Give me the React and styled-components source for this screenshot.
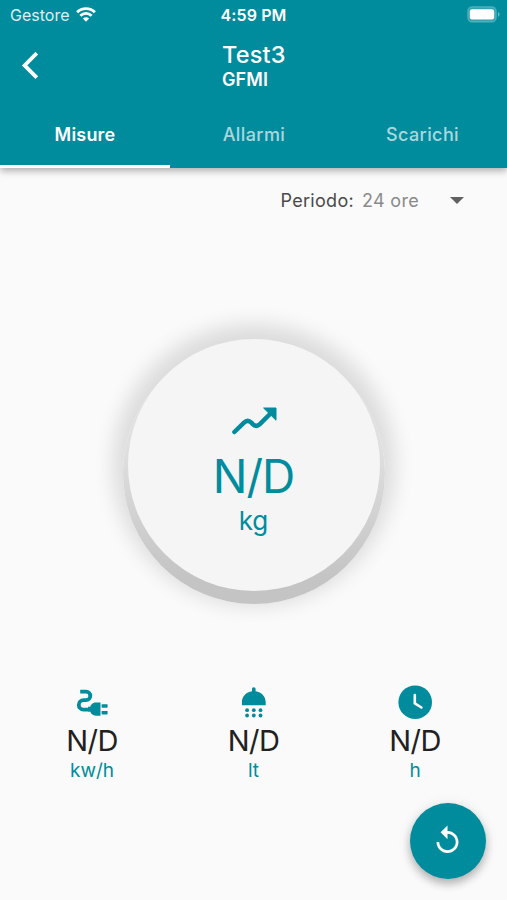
import { useState } from "react";
import styled, { createGlobalStyle } from "styled-components";

const TABS = ["Misure", "Allarmi", "Scarichi"];

const MEASURES = [
    { id: "energy", icon: PlugIcon, value: "N/D", unit: "kw/h" },
    { id: "water", icon: ShowerIcon, value: "N/D", unit: "lt" },
    { id: "time", icon: ClockIcon, value: "N/D", unit: "h" },
];

export default function App() {
    const [activeTab, setActiveTab] = useState("Misure");

    return (
        <Screen>
            <GlobalStyle />
            <Header>
                <StatusBar>
                    <Carrier>
                        <span>Gestore</span>
                        <WifiIcon />
                    </Carrier>
                    <Clock>4:59 PM</Clock>
                    <BatteryIcon />
                </StatusBar>
                <TitleBar>
                    <BackButton aria-label="Indietro">
                        <BackIcon />
                    </BackButton>
                    <Titles>
                        <Title>Test3</Title>
                        <Subtitle>GFMI</Subtitle>
                    </Titles>
                </TitleBar>
                <Tabs>
                    {TABS.map((tab) => (
                        <Tab
                            key={tab}
                            $active={tab === activeTab}
                            onClick={() => setActiveTab(tab)}
                        >
                            {tab}
                        </Tab>
                    ))}
                </Tabs>
            </Header>
            <Period>
                <PeriodLabel>Periodo:</PeriodLabel>
                <PeriodSelect>
                    <span>24 ore</span>
                    <Caret />
                </PeriodSelect>
            </Period>
            <DialArea>
                <DialBase>
                    <DialFace>
                        <TrendIcon />
                        <DialValue>N/D</DialValue>
                        <DialUnit>kg</DialUnit>
                    </DialFace>
                </DialBase>
            </DialArea>
            <Measures>
                {MEASURES.map(({ id, icon: Icon, value, unit }) => (
                    <Measure key={id}>
                        <Icon />
                        <MeasureValue>{value}</MeasureValue>
                        <MeasureUnit>{unit}</MeasureUnit>
                    </Measure>
                ))}
            </Measures>
            <RefreshButton aria-label="Aggiorna">
                <ReplayIcon />
            </RefreshButton>
        </Screen>
    );
}

function WifiIcon() {
    return (
        <svg width="20" height="15" viewBox="0 0 20 15" fill="none" stroke="#fff" strokeWidth="2.9">
            <path d="M1.1 5.3C6 .4 14 .4 18.9 5.3" />
            <path d="M4.4 8.7c3.2-3.1 8-3.1 11.2 0" />
            <path d="M10 14.7 6.9 11.6c1.8-1.7 4.4-1.7 6.2 0z" fill="#fff" stroke="none" />
        </svg>
    );
}

function BatteryIcon() {
    return (
        <svg width="33" height="17" viewBox="0 0 33 17">
            <rect x=".8" y=".8" width="28.4" height="15.2" rx="4.4" fill="#fff" fillOpacity=".2" stroke="#fff" strokeOpacity=".2" strokeWidth="1.5" />
            <rect x="2.8" y="3.2" width="24.4" height="10.2" rx="2.2" fill="#fff" />
            <path d="M31 6c2 .8 2 4 0 4.8z" fill="#fff" fillOpacity=".4" />
        </svg>
    );
}

function BackIcon() {
    return (
        <svg width="18" height="28" viewBox="0 0 18 28" fill="none" stroke="#fff" strokeWidth="3.8">
            <path d="M15.8 2.2 3.6 14.4l12.2 12.2" />
        </svg>
    );
}

function TrendIcon() {
    return (
        <svg width="46" height="28" viewBox="0 0 46 28">
            <path
                d="M3.4 25 13 15.7c2.6-2.5 5-2.3 7.4 0l1.3 1.4c2.4 2.3 4.8 2.3 7.2 0L40 6"
                fill="none"
                stroke="#008c9d"
                strokeWidth="4.5"
                strokeLinecap="round"
            />
            <path d="M32.6 1H45v12.2z" fill="#008c9d" stroke="#008c9d" strokeLinejoin="round" />
        </svg>
    );
}

function PlugIcon() {
    return (
        <svg width="34" height="34" viewBox="-1 0 34 34" fill="#008c9d">
            <path
                d="M4.2 6.6H10a4.2 4.2 0 0 1 0 8.6H7.5a4.7 4.7 0 0 0 0 9.4H14"
                fill="none"
                stroke="#008c9d"
                strokeWidth="3.8"
            />
            <path d="M24.5 17.6V30.8H20c-3.5 0-5-2.3-5.8-4.2H12v-4.8h2.2c.8-1.9 2.3-4.2 5.8-4.2z" />
            <rect x="25.6" y="19.2" width="6" height="3.5" rx=".6" />
            <rect x="25.6" y="25.9" width="6" height="3.5" rx=".6" />
        </svg>
    );
}

function ShowerIcon() {
    return (
        <svg width="34" height="34" viewBox="1 -1 34 34" fill="#008c9d">
            <path d="M16 5.2V3.1a1.8 1.8 0 0 1 3.6 0v2.1C25.5 6 29.7 10.5 29.7 16.5v2.7H5.9v-2.7C5.9 10.5 10.1 6 16 5.2z" />
            {[24.2, 29.5].map((y) =>
                [11.1, 17.8, 24.5].map((x) => <circle key={`${x}-${y}`} cx={x} cy={y} r="1.9" />)
            )}
        </svg>
    );
}

function ClockIcon() {
    return (
        <svg width="34" height="34" viewBox="0 0 34 34">
            <circle cx="17.2" cy="17.2" r="16.8" fill="#008c9d" />
            <path
                d="M16.8 10v8.4l6.6 4.1"
                fill="none"
                stroke="#fafafa"
                strokeWidth="2.6"
                strokeLinecap="round"
                strokeLinejoin="round"
            />
        </svg>
    );
}

function ReplayIcon() {
    return (
        <svg width="33" height="33" viewBox="0 0 24 24" fill="#fff">
            <path d="M12 5V1L7 6l5 5V7c3.31 0 6 2.69 6 6s-2.69 6-6 6-6-2.69-6-6H4c0 4.42 3.58 8 8 8s8-3.58 8-8-3.58-8-8-8z" />
        </svg>
    );
}

const GlobalStyle = createGlobalStyle`
    * {
        box-sizing: border-box;
    }

    body {
        margin: 0;
        background: #fafafa;
        font-family: Inter, "Liberation Sans", sans-serif;
    }

    button {
        border: none;
        padding: 0;
        background: none;
        font-family: inherit;
        cursor: pointer;
    }

    svg {
        display: block;
        flex-shrink: 0;
    }
`;

const Screen = styled.div`
    position: relative;
    display: flex;
    flex-direction: column;
    height: 900px;
    overflow: hidden;
    background: #fafafa;
`;

const Header = styled.header`
    height: 168px;
    background: #008c9d;
    color: #fff;
    box-shadow: 0 3px 7px rgba(0, 0, 0, 0.3);
`;

const StatusBar = styled.div`
    display: grid;
    grid-template-columns: 1fr auto 1fr;
    align-items: center;
    height: 30px;
    padding: 0 7px 0 10px;

    > svg {
        justify-self: end;
        margin-bottom: 2px;
    }
`;

const Carrier = styled.div`
    display: flex;
    align-items: center;
    gap: 7px;
    font-size: 16px;

    span {
        opacity: 0.86;
    }

    svg {
        margin-bottom: 1px;
    }
`;

const Clock = styled.div`
    margin-right: 3px;
    font-size: 16px;
    font-weight: 600;
    letter-spacing: 0.1px;
`;

const TitleBar = styled.div`
    display: flex;
    align-items: center;
    height: 70px;
`;

const BackButton = styled.button`
    display: flex;
    width: 222px;
    padding-left: 21px;
`;

const Titles = styled.div`
    display: flex;
    flex-direction: column;
    padding-top: 2px;
`;

const Title = styled.h1`
    margin: 0;
    font-size: 23.5px;
    font-weight: 500;
    line-height: 27px;
    letter-spacing: 0.2px;
`;

const Subtitle = styled.h2`
    margin: 0;
    font-size: 18px;
    font-weight: 600;
    line-height: 23px;
    letter-spacing: 0.1px;
`;

const Tabs = styled.nav`
    display: grid;
    grid-template-columns: 170px 168px 169px;
    height: 68px;
`;

const Tab = styled.button`
    padding-top: 3px;
    border-bottom: 3px solid ${({ $active }) => ($active ? "#fff" : "transparent")};
    color: ${({ $active }) => ($active ? "#fff" : "rgba(255, 255, 255, 0.68)")};
    font-size: 18px;
    font-weight: ${({ $active }) => ($active ? 600 : 500)};
    letter-spacing: ${({ $active }) => ($active ? "0.2px" : "0.4px")};
`;

const Period = styled.div`
    display: flex;
    justify-content: flex-end;
    align-items: center;
    gap: 8px;
    height: 64px;
    padding-right: 43px;
    font-size: 18px;
    letter-spacing: 0.3px;
`;

const PeriodLabel = styled.span`
    color: #4a4a4a;
`;

const PeriodSelect = styled.button`
    display: flex;
    justify-content: space-between;
    align-items: center;
    width: 102px;
    color: #8a8a8a;
    font-size: 18px;
    letter-spacing: 0.3px;
`;

const Caret = styled.span`
    margin-top: 1px;
    border: 7px solid transparent;
    border-top-color: #616161;
    border-bottom: none;
`;

const DialArea = styled.main`
    display: flex;
    justify-content: center;
    padding-top: 110px;
    height: 446px;
`;

const DialBase = styled.section`
    display: flex;
    justify-content: center;
    width: 262px;
    height: 262px;
    border-radius: 50%;
    background: linear-gradient(#e0e0e0 40%, #c4c4c4 90%);
    box-shadow: 0 -8px 20px 10px rgba(0, 0, 0, 0.12);
`;

const DialFace = styled.div`
    display: flex;
    flex-direction: column;
    align-items: center;
    width: 252px;
    height: 252px;
    margin-top: -3px;
    padding-top: 68px;
    border-radius: 50%;
    background: #f5f5f5;
    color: #008c9d;
`;

const DialValue = styled.div`
    margin-top: 13px;
    font-size: 46px;
    line-height: 56px;
    letter-spacing: -0.9px;
`;

const DialUnit = styled.div`
    margin-top: 1px;
    font-size: 26px;
    line-height: 32px;
`;

const Measures = styled.section`
    display: grid;
    grid-template-columns: repeat(3, 161.5px);
    justify-content: center;
    padding-top: 7px;
`;

const Measure = styled.div`
    display: flex;
    flex-direction: column;
    align-items: center;
`;

const MeasureValue = styled.div`
    margin-top: 4px;
    color: #212121;
    font-size: 29px;
    line-height: 36px;
    letter-spacing: -0.5px;
`;

const MeasureUnit = styled.div`
    margin-top: 1px;
    color: #008c9d;
    font-size: 19px;
    line-height: 22px;
`;

/* floats over the page content */
const RefreshButton = styled.button`
    position: absolute;
    right: 21.5px;
    bottom: 21.5px;
    display: flex;
    align-items: center;
    justify-content: center;
    width: 76px;
    height: 76px;
    border-radius: 50%;
    background: #008c9d;
    box-shadow: 0 5px 9px rgba(0, 0, 0, 0.24), 0 2px 14px rgba(0, 0, 0, 0.1);
`;
